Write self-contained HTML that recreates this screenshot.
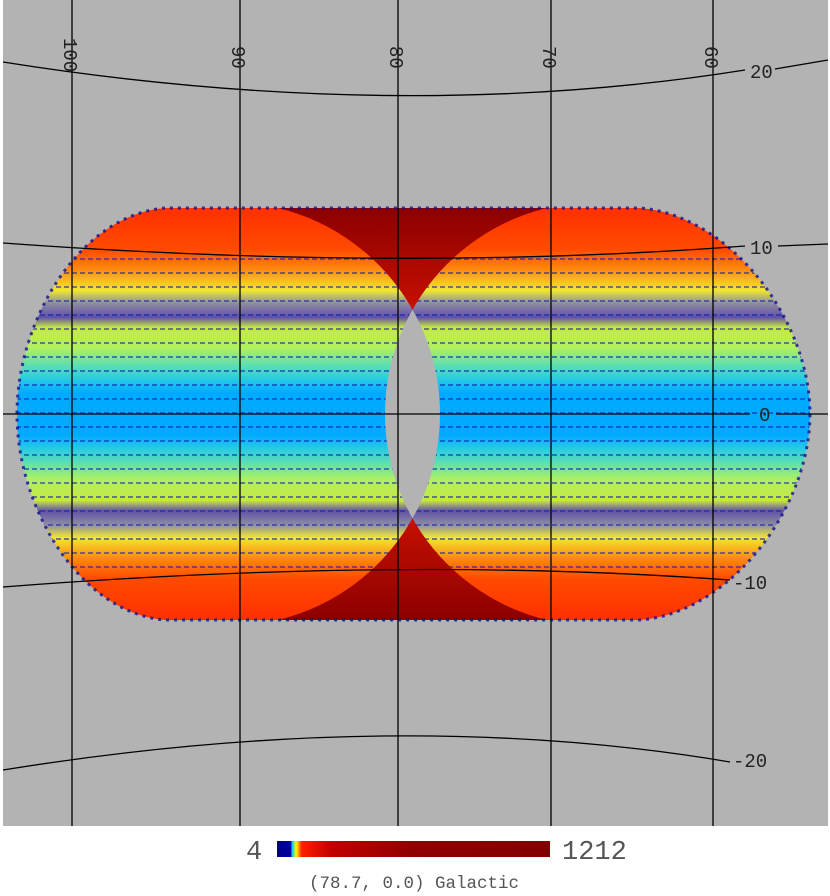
<!DOCTYPE html>
<html><head><meta charset="utf-8"><style>
html,body{margin:0;padding:0;background:#fff;width:830px;height:896px;overflow:hidden}
svg{display:block}
</style></head><body>
<svg width="830" height="896" viewBox="0 0 830 896" xmlns="http://www.w3.org/2000/svg">
<defs>
<linearGradient id="st" x1="0" y1="208" x2="0" y2="620" gradientUnits="userSpaceOnUse">
<stop offset="0" stop-color="#ff3000"/>
<stop offset="0.10" stop-color="#ff4a00"/>
<stop offset="0.15" stop-color="#ff8a10"/>
<stop offset="0.20" stop-color="#f0e830"/>
<stop offset="0.23" stop-color="#9090a0"/>
<stop offset="0.265" stop-color="#6050a8"/>
<stop offset="0.29" stop-color="#c8e840"/>
<stop offset="0.34" stop-color="#b0f060"/>
<stop offset="0.38" stop-color="#60e0b0"/>
<stop offset="0.42" stop-color="#20c8e8"/>
<stop offset="0.45" stop-color="#00aaff"/>
<stop offset="0.55" stop-color="#00aaff"/>
<stop offset="0.58" stop-color="#20c8e8"/>
<stop offset="0.62" stop-color="#60e0b0"/>
<stop offset="0.66" stop-color="#b0f060"/>
<stop offset="0.71" stop-color="#c8e840"/>
<stop offset="0.735" stop-color="#6050a8"/>
<stop offset="0.77" stop-color="#9090a0"/>
<stop offset="0.80" stop-color="#f0e830"/>
<stop offset="0.85" stop-color="#ff8a10"/>
<stop offset="0.90" stop-color="#ff4a00"/>
<stop offset="1" stop-color="#ff3000"/>
</linearGradient>
<linearGradient id="dr" x1="0" y1="208" x2="0" y2="620" gradientUnits="userSpaceOnUse">
<stop offset="0" stop-color="#8c0000"/>
<stop offset="0.25" stop-color="#c81000"/>
<stop offset="0.75" stop-color="#c81000"/>
<stop offset="1" stop-color="#8c0000"/>
</linearGradient>
<linearGradient id="cb" x1="277" x2="550" y1="0" y2="0" gradientUnits="userSpaceOnUse">
<stop offset="0" stop-color="#00008b"/>
<stop offset="0.05" stop-color="#0000a0"/>
<stop offset="0.055" stop-color="#00c0ff"/>
<stop offset="0.07" stop-color="#ffff00"/>
<stop offset="0.09" stop-color="#ff2000"/>
<stop offset="0.2" stop-color="#c00000"/>
<stop offset="0.5" stop-color="#900000"/>
<stop offset="1" stop-color="#820000"/>
</linearGradient>
<clipPath id="outer"><path d="M165,208 C80,215 17,320 17,414 C17,508 80,613 165,620 L640,620 C730,613 810,508 810,414 C810,320 730,215 640,208 Z"/></clipPath>
<clipPath id="lc"><circle cx="228" cy="414" r="212"/></clipPath>
<mask id="m"><rect x="0" y="0" width="830" height="830" fill="#fff"/><circle cx="228" cy="414" r="212" fill="#000"/><circle cx="597" cy="414" r="212" fill="#000"/></mask>
<pattern id="dots" x="0" y="0" width="8" height="14" patternUnits="userSpaceOnUse"><rect x="0" y="6" width="5" height="2" fill="#1020b0" opacity="0.55"/></pattern>
</defs>
<rect x="0" y="0" width="830" height="896" fill="#fff"/>
<rect x="3" y="0" width="825" height="826" fill="#b3b3b3"/>
<g clip-path="url(#outer)">
<rect x="0" y="200" width="830" height="430" fill="url(#st)"/>
<rect x="0" y="255" width="830" height="320" fill="url(#dots)"/>
<rect x="250" y="200" width="330" height="430" fill="url(#dr)" mask="url(#m)"/>
<circle cx="597" cy="414" r="212" fill="#b3b3b3" clip-path="url(#lc)"/>
</g>
<path d="M165,208 C80,215 17,320 17,414 C17,508 80,613 165,620 L640,620 C730,613 810,508 810,414 C810,320 730,215 640,208 Z" fill="none" stroke="#101090" stroke-width="3" stroke-dasharray="3 5" opacity="0.8"/>
<g stroke="#000" stroke-width="1.3" fill="none">
<line x1="72" y1="0" x2="72" y2="826"/>
<line x1="240" y1="0" x2="240" y2="826"/>
<line x1="398" y1="0" x2="398" y2="826"/>
<line x1="551" y1="0" x2="551" y2="826"/>
<line x1="713" y1="0" x2="713" y2="826"/>
<path d="M3,62 Q400,125 745,70"/>
<path d="M3,243 Q400,272 745,246"/>
<path d="M3,414 L750,414"/>
<path d="M3,587 Q400,556 730,580"/>
<path d="M3,770 Q400,706 730,762"/>
<path d="M776,414 L828,414"/>
<path d="M778,246 L828,244"/>
<path d="M775,69 L828,60"/>
</g>
<g font-family="Liberation Mono, monospace" font-size="19" fill="#222">
<text transform="translate(64,38) rotate(90)">100</text>
<text transform="translate(232,46) rotate(90)">90</text>
<text transform="translate(390,46) rotate(90)">80</text>
<text transform="translate(543,46) rotate(90)">70</text>
<text transform="translate(705,46) rotate(90)">60</text>
<text x="750" y="78">20</text>
<text x="750" y="254">10</text>
<text x="759" y="421">0</text>
<text x="733" y="589">-10</text>
<text x="733" y="767">-20</text>
</g>
<rect x="277" y="841" width="273" height="16" fill="url(#cb)"/>
<g font-family="Liberation Mono, monospace" fill="#555">
<text x="246" y="859" font-size="27">4</text>
<text x="562" y="859" font-size="27">1212</text>
<text x="414" y="888" font-size="17.5" text-anchor="middle">(78.7, 0.0) Galactic</text>
</g>
</svg>
</body></html>
